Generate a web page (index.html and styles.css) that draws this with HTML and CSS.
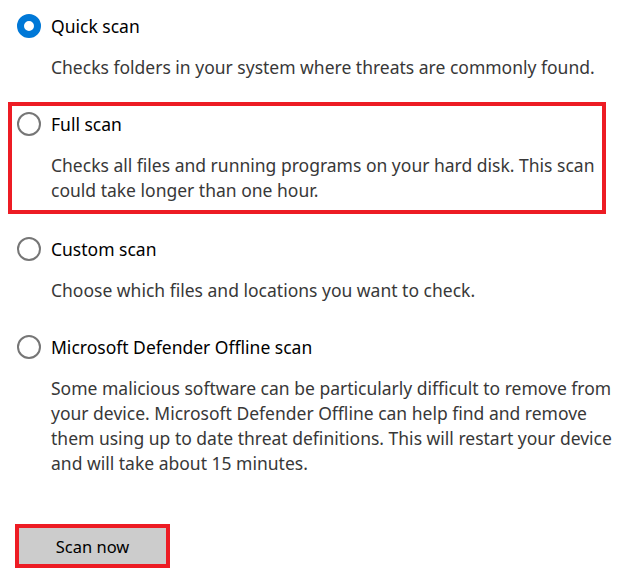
FILE: index.html
```html
<!DOCTYPE html>
<html>
<head>
  <title>Scan options</title>
  <link rel="stylesheet" href="styles.css">
</head>
<body>
  <div class="scan-options">
    <div class="option">
      <div class="option-row">
        <span class="radio checked"></span>
        <span class="option-label">Quick scan</span>
      </div>
      <p class="option-desc">Checks folders in your system where threats are commonly found.</p>
    </div>

    <div class="option highlight">
      <div class="option-row">
        <span class="radio"></span>
        <span class="option-label">Full scan</span>
      </div>
      <p class="option-desc">Checks all files and running programs on your hard disk. This scan<br>could take longer than one hour.</p>
    </div>

    <div class="option">
      <div class="option-row">
        <span class="radio"></span>
        <span class="option-label">Custom scan</span>
      </div>
      <p class="option-desc">Choose which files and locations you want to check.</p>
    </div>

    <div class="option">
      <div class="option-row">
        <span class="radio"></span>
        <span class="option-label">Microsoft Defender Offline scan</span>
      </div>
      <p class="option-desc">Some malicious software can be particularly difficult to remove from<br>your device. Microsoft Defender Offline can help find and remove<br>them using up to date threat definitions. This will restart your device<br>and will take about 15 minutes.</p>
    </div>

    <div class="scan-action">
      <button class="scan-button">Scan now</button>
    </div>
  </div>
</body>
</html>
```

FILE: styles.css
```css
/* Page */
body {
  margin: 0;
  background-color: #fff;
  font-family: "Noto Sans", "Open Sans", sans-serif;
  font-size: 17.5px;
  color: #000;
}

/* Options list */
.scan-options {
  padding: 14px 0 0 17px;
}

.option {
  margin-bottom: 32px;
}

/* Full scan is boxed in red */
.option.highlight {
  width: 585px;
  margin-left: -9px;
  margin-top: -10px;
  margin-bottom: 23px;
  padding: 6px 0 7px 5px;
  border: 4px solid #ed1c24;
}

.option-row {
  display: flex;
  align-items: center;
  gap: 10px;
  height: 24px;
}

.option-label {
  font-size: 17.5px;
  line-height: 24px;
}

.option-desc {
  margin: 17px 0 0 34px;
  line-height: 25px;
  color: #383838;
  white-space: nowrap;
}

/* Radio buttons */
.radio {
  box-sizing: border-box;
  width: 24px;
  height: 24px;
  border-radius: 50%;
  border: 2px solid #767676;
  flex-shrink: 0;
}

.radio.checked {
  border: 7px solid #0078d7;
  background-color: #fff;
}

/* Scan button */
.scan-action {
  margin-top: 48px;
  margin-left: -2px;
}

.scan-button {
  box-sizing: border-box;
  width: 155px;
  height: 44px;
  border: 4px solid #ed1c24;
  background-color: #cccccc;
  font-family: inherit;
  font-size: 16.5px;
  color: #000;
  padding: 0;
}
```
